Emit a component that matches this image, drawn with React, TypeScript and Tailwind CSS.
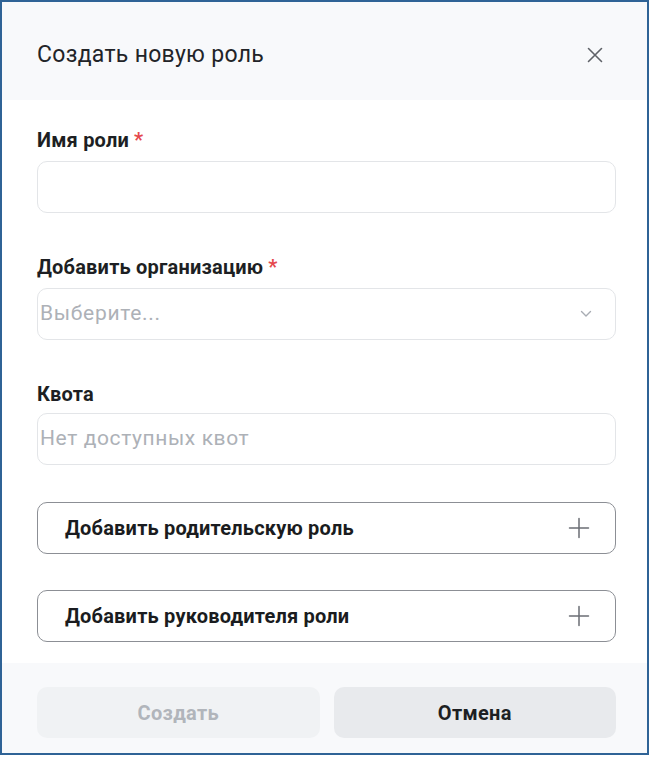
import React from "react";

function Plus() {
  return (
    <svg width="22" height="22" viewBox="0 0 22 22" fill="none">
      <path d="M11 1.5V20.5M1.5 11H20.5" stroke="#6b6e74" strokeWidth="1.5" strokeLinecap="round" />
    </svg>
  );
}

function Label({ text, req }: { text: string; req?: boolean }) {
  return (
    <div className="text-[20px] leading-[24px] font-bold text-[#1d1f23] tracking-[0.2px]">
      {text}
      {req && <span className="text-[#e5484d] ml-[5px]">*</span>}
    </div>
  );
}

export default function App() {
  return (
    <div className="w-[651px] h-[758px] bg-white" style={{ fontFamily: "Roboto, 'Noto Sans', sans-serif" }}>
      <div className="w-[649px] h-[755px] border-2 border-[#2f6396] flex flex-col bg-white">
        <div className="h-[98px] shrink-0 bg-[#f8f9fb] flex items-center justify-between pl-[35px] pr-[44px] pt-[8px]">
          <div className="text-[23px] text-[#222428] tracking-[0.3px]">Создать новую роль</div>
          <svg width="16" height="16" viewBox="0 0 16 16" fill="none">
            <path d="M1.5 1.5L14.5 14.5M14.5 1.5L1.5 14.5" stroke="#5f6268" strokeWidth="1.6" strokeLinecap="round" />
          </svg>
        </div>
        <div className="flex-1 pl-[35px] pr-[31px] pt-[28px] flex flex-col">
          <Label text="Имя роли" req />
          <div className="mt-[9px] h-[52px] rounded-[10px] border border-[#e3e5e8] bg-white" />

          <div className="mt-[42px]">
            <Label text="Добавить организацию" req />
          </div>
          <div className="mt-[9px] h-[52px] rounded-[10px] border border-[#e3e5e8] bg-white flex items-center justify-between pl-[2px] pr-[23px]">
            <span className="text-[21px] text-[#adb1b7] tracking-[0.7px]">Выберите...</span>
            <svg width="12" height="8" viewBox="0 0 12 8" fill="none">
              <path d="M1.5 1.5L6 6L10.5 1.5" stroke="#a8acb3" strokeWidth="1.4" strokeLinecap="round" strokeLinejoin="round" />
            </svg>
          </div>

          <div className="mt-[42px]">
            <Label text="Квота" />
          </div>
          <div className="mt-[7px] h-[52px] rounded-[10px] border border-[#e3e5e8] bg-white flex items-center pl-[2px]">
            <span className="text-[21px] text-[#adb1b7] tracking-[0.6px]">Нет доступных квот</span>
          </div>

          <div className="mt-[37px] h-[52px] rounded-[10px] border border-[#8c8f95] flex items-center justify-between pl-[27px] pr-[25px]">
            <span className="text-[20px] font-bold text-[#1a1c20] tracking-[0.2px]">Добавить родительскую роль</span>
            <Plus />
          </div>
          <div className="mt-[36px] h-[52px] rounded-[10px] border border-[#8c8f95] flex items-center justify-between pl-[27px] pr-[25px]">
            <span className="text-[20px] font-bold text-[#1a1c20] tracking-[0.2px]">Добавить руководителя роли</span>
            <Plus />
          </div>
        </div>
        <div className="h-[90px] shrink-0 bg-[#f8f9fb] pl-[35px] pr-[31px] pt-[24px] flex gap-[14px]">
          <div className="flex-1 h-[51px] rounded-[10px] bg-[#f0f2f4] flex items-center justify-center text-[20px] font-bold text-[#b1b5bb] tracking-[0.3px]">
            Создать
          </div>
          <div className="flex-1 h-[51px] rounded-[10px] bg-[#e8eaed] flex items-center justify-center text-[20px] font-bold text-[#1d1f23] tracking-[0.3px]">
            Отмена
          </div>
        </div>
      </div>
    </div>
  );
}
